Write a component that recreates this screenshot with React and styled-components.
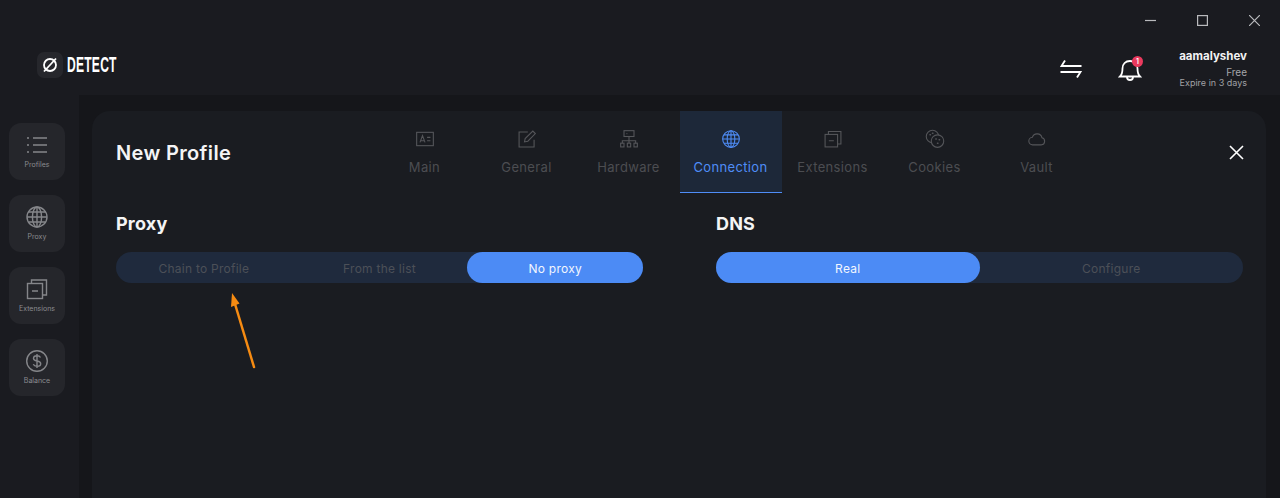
import React from 'react'
import styled, { createGlobalStyle } from 'styled-components'

const Global = createGlobalStyle`
  html, body { margin: 0; padding: 0; background: #1a1b20; }
  body { font-family: Inter, "Open Sans", sans-serif; overflow: hidden; }
`

const Page = styled.div`
  position: relative;
  width: 1280px;
  height: 498px;
  overflow: hidden;
  background: #1a1b20;
  display: flex;
  flex-direction: column;
`

const TitleBar = styled.div`
  height: 40px;
  display: flex;
  justify-content: flex-end;
  align-items: center;
  padding-right: 20px;
  gap: 41px;
  color: #b9babd;
`

const WinButton = styled.svg`
  width: 11px;
  height: 11px;
  fill: none;
  stroke: currentColor;
  stroke-width: 1.2;
`

const Header = styled.header`
  height: 55px;
  display: flex;
  align-items: center;
  justify-content: space-between;
  padding: 0 33px 0 37px;
`

const Logo = styled.div`
  display: flex;
  align-items: center;
  gap: 4px;
  margin-top: -5px;
`

const LogoMark = styled.div`
  width: 26px;
  height: 26px;
  border-radius: 7px;
  background: #26272c;
  display: flex;
  align-items: center;
  justify-content: center;
`

const LogoText = styled.span`
  font-family: "Liberation Sans", sans-serif;
  font-weight: 700;
  font-size: 22px;
  letter-spacing: 0.4px;
  color: #fff;
  transform: scaleX(0.55);
  transform-origin: left center;
  width: 50px;
`

const HeaderRight = styled.div`
  display: flex;
  align-items: center;
  margin-top: 3px;
`

const Bell = styled.div`
  position: relative;
  width: 24px;
  height: 26px;
  margin-left: 36px;
`

const Badge = styled.span`
  position: absolute;
  top: 0;
  right: -1px;
  width: 11px;
  height: 11px;
  border-radius: 50%;
  background: #ea3a5e;
  color: #fff;
  font-size: 7px;
  font-weight: 600;
  line-height: 11px;
  text-align: center;
`

const User = styled.div`
  width: 105px;
  display: flex;
  flex-direction: column;
  align-items: flex-end;
  padding-bottom: 2px;
`

const UserName = styled.div`
  font-size: 11.5px;
  font-weight: 700;
  line-height: 15px;
  color: #f2f2f3;
`

const UserPlan = styled.div`
  font-size: 10px;
  line-height: 12px;
  margin-top: 2px;
  color: #a6a7aa;
`

const UserExpire = styled.div`
  font-size: 9px;
  line-height: 10px;
  color: #a0a1a5;
`

const Body = styled.div`
  flex: 1;
  display: flex;
  min-height: 0;
`

const Sidebar = styled.nav`
  width: 79px;
  flex: none;
  box-sizing: border-box;
  padding: 28px 0 0 9px;
  display: flex;
  flex-direction: column;
  gap: 15px;
`

const SideCard = styled.div`
  width: 56px;
  height: 57px;
  border-radius: 12px;
  background: #25262b;
  display: flex;
  flex-direction: column;
  align-items: center;
  justify-content: flex-start;
  padding-top: 10px;
  box-sizing: border-box;
  color: #85868a;
`

const SideIcon = styled.svg`
  width: 24px;
  height: 24px;
  fill: none;
  stroke: #85868a;
  stroke-width: 1.4;
`

const SideLabel = styled.span`
  font-size: 7px;
  line-height: 10px;
  margin-top: 3px;
  color: #8b8c90;
`

const Main = styled.main`
  flex: 1;
  background: #15161a;
  padding: 16px 14px 0 13px;
  min-width: 0;
`

const Panel = styled.section`
  height: 100%;
  box-sizing: border-box;
  background: #1a1c21;
  border-radius: 18px 18px 0 0;
  padding: 0 23px 0 24px;
`

const PanelHead = styled.div`
  position: relative;
  display: flex;
  align-items: flex-start;
  height: 82px;
`

const Title = styled.h1`
  width: 258px;
  flex: none;
  margin: 29px 0 0;
  font-size: 20px;
  line-height: 26px;
  font-weight: 600;
  letter-spacing: 0.35px;
  color: #f4f4f5;
`

const Tabs = styled.div`
  display: flex;
`

const Tab = styled.div`
  width: 102px;
  height: 82px;
  box-sizing: border-box;
  padding: 18px 1px 0 0;
  display: flex;
  flex-direction: column;
  align-items: center;
  background: ${p => (p.$active ? '#1d2839' : 'transparent')};
  border-bottom: 1.5px solid ${p => (p.$active ? '#4f8df7' : 'transparent')};
`

const TabIcon = styled.svg`
  width: 20px;
  height: 20px;
  fill: none;
  stroke: ${p => (p.$active ? '#4f8df7' : '#55565a')};
  stroke-width: 1.3;
`

const TabLabel = styled.span`
  margin-top: 9px;
  font-size: 13px;
  line-height: 18px;
  letter-spacing: 0.35px;
  color: ${p => (p.$active ? '#4f8df7' : '#4c4d51')};
`

const CloseButton = styled.svg`
  position: absolute;
  top: 34px;
  right: -1px;
  width: 15px;
  height: 15px;
  fill: none;
  stroke: #fff;
  stroke-width: 1.6;
`

const Columns = styled.div`
  display: grid;
  grid-template-columns: 527px 527px;
  gap: 73px;
  margin-top: 19px;
`

const SectionTitle = styled.h2`
  margin: 0 0 16px;
  font-size: 18px;
  line-height: 24px;
  font-weight: 700;
  letter-spacing: 0.2px;
  color: #f4f4f5;
`

const Segmented = styled.div`
  height: 31px;
  border-radius: 15.5px;
  background: #1f2a3d;
  display: flex;
`

const Segment = styled.div`
  flex: 1;
  border-radius: 15.5px;
  display: flex;
  align-items: center;
  justify-content: center;
  padding-top: 1px;
  box-sizing: border-box;
  font-size: 12px;
  letter-spacing: 0.25px;
  background: ${p => (p.$active ? '#4c8bf5' : 'transparent')};
  color: ${p => (p.$active ? '#f2f6fe' : '#4c5058')};
`

const Arrow = styled.svg`
  position: absolute;
  left: 228px;
  top: 290px;
  width: 30px;
  height: 80px;
`

const Globe = () => (
  <>
    <circle cx="12" cy="12" r="10" />
    <ellipse cx="12" cy="12" rx="4.6" ry="10" />
    <path d="M12 2v20M2 12h20M3.4 7h17.2M3.4 17h17.2" />
  </>
)

const Stack = () => (
  <>
    <rect x="2.5" y="6.5" width="15" height="15" />
    <path d="M6.5 6.500V3h15v15h-4M7 14h6" />
  </>
)

const tabs = [
  {
    name: 'Main',
    icon: (
      <>
        <rect x="2" y="4" width="20" height="16" />
        <path d="M6 16l3-8 3 8M7 14h4M14.5 10h4M14.5 14h4" />
      </>
    ),
  },
  {
    name: 'General',
    icon: (
      <>
        <path d="M20.5 13v8.500h-18v-18H13" />
        <path d="M9 15.500l.8-4L19 2.500l3 3-9 9.200z" />
      </>
    ),
  },
  {
    name: 'Hardware',
    icon: (
      <>
        <rect x="6" y="2" width="12" height="7" />
        <path d="M12 9v5M4 17v-3h16v3M12 14v3M9 5.500h1" />
        <rect x="2" y="17" width="4" height="4.500" />
        <rect x="10" y="17" width="4" height="4.500" />
        <rect x="18" y="17" width="4" height="4.500" />
      </>
    ),
  },
  { name: 'Connection', icon: <Globe />, active: true },
  { name: 'Extensions', icon: <Stack /> },
  {
    name: 'Cookies',
    icon: (
      <>
        <circle cx="9" cy="9" r="7.500" />
        <circle cx="15" cy="14.500" r="7.500" fill="#1a1c21" />
        <path d="M13 12h.5M17 13h.5M15 17h.5M6 7h.5M9 5h.5" strokeLinecap="round" strokeWidth="1.800" />
      </>
    ),
  },
  {
    name: 'Vault',
    icon: <path d="M7 19a4.500 4.500 0 0 1-.6-9A6 6 0 0 1 18 10.600 4.300 4.300 0 0 1 17.500 19z" />,
  },
]

const sideItems = [
  {
    name: 'Profiles',
    icon: <path d="M8 5h14M8 12h14M8 19h14M2 5h2M2 12h2M2 19h2" />,
  },
  { name: 'Proxy', icon: <Globe /> },
  { name: 'Extensions', icon: <Stack /> },
  {
    name: 'Balance',
    icon: (
      <>
        <circle cx="12" cy="12" r="10.300" />
        <path d="M15.500 8.500c-.6-1.200-2-1.800-3.500-1.800-2 0-3.500 1-3.500 2.700 0 3.600 7.200 1.700 7.200 5.300 0 1.700-1.700 2.600-3.700 2.600-1.600 0-3.100-.7-3.700-2M12 5v14" />
      </>
    ),
  },
]

const App = () => {
  return (
    <Page>
      <Global />
      <TitleBar>
        <WinButton viewBox="0 0 11 11"><path d="M0 5.500h11" /></WinButton>
        <WinButton viewBox="0 0 11 11"><rect x="0.600" y="0.600" width="9.800" height="9.800" /></WinButton>
        <WinButton viewBox="0 0 11 11"><path d="M0 0l11 11M11 0L0 11" /></WinButton>
      </TitleBar>

      <Header>
        <Logo>
          <LogoMark>
            <svg width="16" height="16" viewBox="0 0 16 16" fill="none" stroke="#fff" strokeWidth="1.800">
              <circle cx="8" cy="8" r="6" />
              <path d="M14 1.500L2 14.500" />
            </svg>
          </LogoMark>
          <LogoText>DETECT</LogoText>
        </Logo>
        <HeaderRight>
          <svg width="22" height="22" viewBox="0 0 22 22" fill="none" stroke="#fff" strokeWidth="1.800">
            <path d="M21.500 8H1.500L5 2.500M.5 14h20L17 19.500" />
          </svg>
          <Bell>
            <svg width="24" height="26" viewBox="0 0 24 26" fill="none" stroke="#fff" strokeWidth="1.800">
              <path d="M2 20.500c2-2 2.500-3.500 2.500-8 0-4.500 3-7.500 7.500-7.500s7.500 3 7.500 7.500c0 4.500.5 6 2.500 8z" />
              <path d="M9 21c0 2 1.200 3 3 3s3-1 3-3" />
            </svg>
            <Badge>1</Badge>
          </Bell>
          <User>
            <UserName>aamalyshev</UserName>
            <UserPlan>Free</UserPlan>
            <UserExpire>Expire in 3 days</UserExpire>
          </User>
        </HeaderRight>
      </Header>

      <Body>
        <Sidebar>
          {sideItems.map(item => (
            <SideCard key={item.name}>
              <SideIcon viewBox="0 0 24 24">{item.icon}</SideIcon>
              <SideLabel>{item.name}</SideLabel>
            </SideCard>
          ))}
        </Sidebar>
        <Main>
          <Panel>
            <PanelHead>
              <Title>New Profile</Title>
              <Tabs>
                {tabs.map(tab => (
                  <Tab key={tab.name} $active={tab.active}>
                    <TabIcon viewBox="0 0 24 24" $active={tab.active}>{tab.icon}</TabIcon>
                    <TabLabel $active={tab.active}>{tab.name}</TabLabel>
                  </Tab>
                ))}
              </Tabs>
              <CloseButton viewBox="0 0 15 15"><path d="M1 1l13 13M14 1L1 14" /></CloseButton>
            </PanelHead>
            <Columns>
              <div>
                <SectionTitle>Proxy</SectionTitle>
                <Segmented>
                  <Segment>Chain to Profile</Segment>
                  <Segment>From the list</Segment>
                  <Segment $active>No proxy</Segment>
                </Segmented>
              </div>
              <div>
                <SectionTitle>DNS</SectionTitle>
                <Segmented>
                  <Segment $active>Real</Segment>
                  <Segment>Configure</Segment>
                </Segmented>
              </div>
            </Columns>
          </Panel>
        </Main>
      </Body>

      <Arrow viewBox="0 0 30 80">
        <path d="M26 77L7 14" stroke="#f68b12" strokeWidth="2.500" strokeLinecap="round" />
        <path d="M4 3l7.500 10.500L3 17z" fill="#f68b12" />
      </Arrow>
    </Page>
  )
}

export default App
